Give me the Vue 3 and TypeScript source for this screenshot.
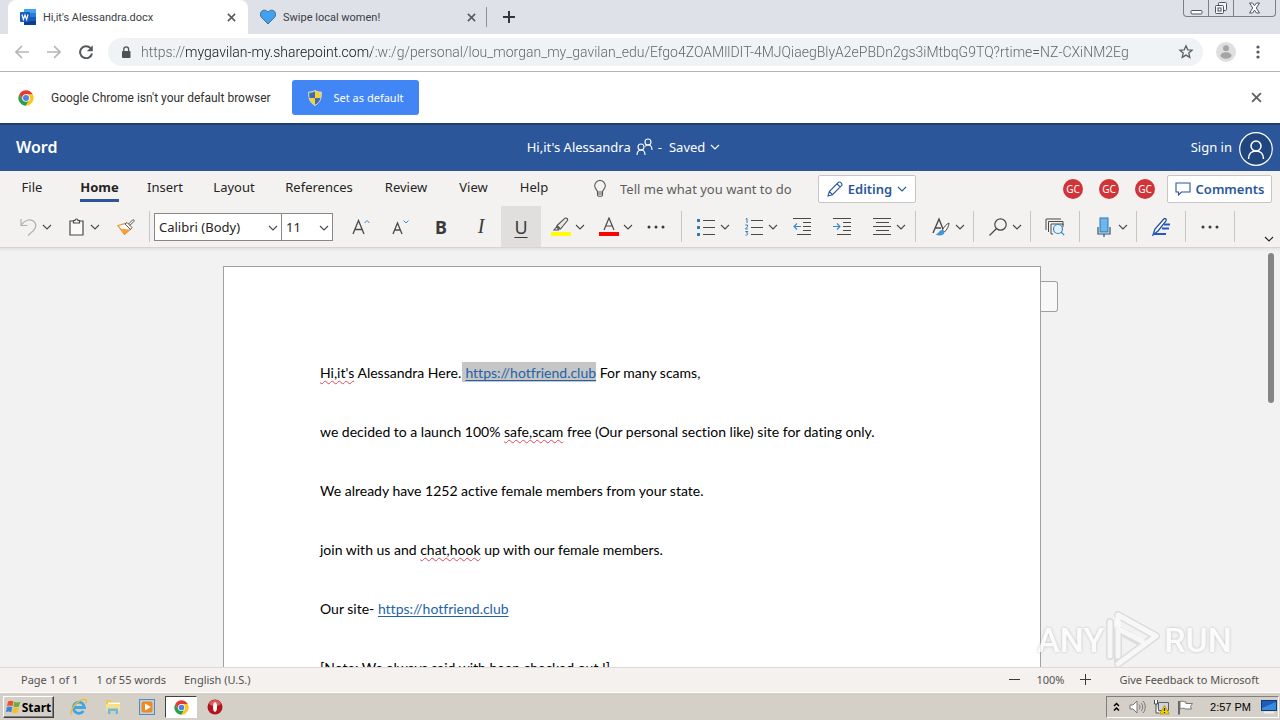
<script setup lang="ts">
import { ref } from 'vue'

const url = ref(
  'https://mygavilan-my.sharepoint.com/:w:/g/personal/lou_morgan_my_gavilan_edu/Efgo4ZOAMllDIT-4MJQiaegBlyA2ePBDn2gs3iMtbqG9TQ?rtime=NZ-CXiNM2Eg'
)
const ribbonTabs: string[] = ['File', 'Home', 'Insert', 'Layout', 'References', 'Review', 'View', 'Help']
const activeTab = ref('Home')
const collaborators: string[] = ['GC', 'GC', 'GC']
const fontName = ref('Calibri (Body)')
const fontSize = ref('11')
const tellMe = ref('')
</script>

<template>
  <svg class="defs" aria-hidden="true">
    <defs>
      <symbol id="chev" viewBox="0 0 10 6"><path d="M1 1l4 4 4-4" fill="none" stroke="currentColor" stroke-width="1.1" /></symbol>
      <symbol id="cross" viewBox="0 0 10 10"><path d="M1 1l8 8M9 1l-8 8" fill="none" stroke="currentColor" stroke-width="1.7" /></symbol>
      <symbol id="dots" viewBox="0 0 18 4"><circle cx="2" cy="2" r="1.5" /><circle cx="9" cy="2" r="1.5" /><circle cx="16" cy="2" r="1.5" /></symbol>
      <symbol id="chrome" viewBox="0 0 48 48">
        <circle cx="24" cy="24" r="23" fill="#fff" />
        <path d="M4.100 12.500A23 23 0 0 0 24 47L34 29.700 24 24 14 29.700Z" fill="#2c9f4b" />
        <path d="M43.900 12.500A23 23 0 0 1 24 47L34 29.700 24 12.500Z" fill="#fbc816" />
        <path d="M4.100 12.500L14 29.700 24 24V12.500H43.900A23 23 0 0 0 4.100 12.500Z" fill="#e33b2e" />
        <circle cx="24" cy="24" r="11.500" fill="#fff" />
        <circle cx="24" cy="24" r="9" fill="#4a83ee" />
      </symbol>
    </defs>
  </svg>
  <div class="desktop">
    <header class="tabstrip">
      <div class="tab active">
        <svg class="ico16" viewBox="0 0 16 16">
          <rect x="4" y="0" width="12" height="16" rx="1" fill="#2b7cd3" />
          <rect x="4" y="0" width="12" height="4" fill="#41a5ee" />
          <rect x="4" y="8" width="12" height="4" fill="#185abd" />
          <rect x="4" y="12" width="12" height="4" fill="#103f91" />
          <rect x="0" y="3" width="10" height="10" rx="1" fill="#185abd" />
          <path d="M2 5.500l1.400 5L5 6l1.600 4.500L8 5.500" fill="none" stroke="#fff" stroke-width="1.200" />
        </svg>
        <span class="tab-title">Hi,it's Alessandra.docx</span>
        <button class="close" aria-label="Close tab"><svg width="9" height="9"><use href="#cross" /></svg></button>
      </div>
      <div class="tab">
        <svg class="ico16" viewBox="0 0 16 16">
          <path d="M8 15L1.200 8C-.5 5.500.5 1.500 4 1.200 6 1 7.500 2.200 8 3.200 8.500 2.200 10 1 12 1.200c3.500.3 4.500 4.300 2.800 6.800z" fill="#41a0ef" stroke="#3e7096" />
        </svg>
        <span class="tab-title">Swipe local women!</span>
        <button class="close" aria-label="Close tab"><svg width="9" height="9"><use href="#cross" /></svg></button>
      </div>
      <span class="tab-divider"></span>
      <button class="new-tab" aria-label="New tab"><svg width="12" height="12" viewBox="0 0 12 12"><path d="M6 0v12M0 6h12" stroke="#33373d" stroke-width="2" /></svg></button>
      <div class="window-controls">
        <button aria-label="Minimize"><svg width="13" height="14" viewBox="0 0 13 14"><rect x="1" y="9.500" width="11" height="3.500" rx="1" fill="#fff" stroke="#50545c" /></svg></button>
        <button aria-label="Restore">
          <svg width="14" height="14" viewBox="0 0 14 14" fill="#f5f6f9" stroke="#50545c">
            <rect x="4.500" y="1.500" width="8" height="8" rx="1" /><rect x="1.500" y="4.500" width="8" height="8" rx="1" /><rect x="4" y="7" width="3" height="3" />
          </svg>
        </button>
        <button class="wide" aria-label="Close window">
          <svg width="13" height="12" viewBox="0 0 13 12"><path d="M1.500 1h3l2 2.700 2-2.700h3L8.300 6l3.200 5h-3l-2-2.800L4.500 11h-3l3.200-5z" fill="#fff" stroke="#50545c" /></svg>
        </button>
      </div>
    </header>

    <nav class="toolbar">
      <button class="nav" aria-label="Back"><svg width="14" height="14" viewBox="0 0 14 14"><path d="M14 7H1.500M7 1L1 7l6 6" fill="none" stroke="#b5b5b5" stroke-width="1.600" /></svg></button>
      <button class="nav" aria-label="Forward"><svg width="14" height="14" viewBox="0 0 14 14"><path d="M0 7h12.500M7 1l6 6-6 6" fill="none" stroke="#b5b5b5" stroke-width="1.600" /></svg></button>
      <button class="nav" aria-label="Reload">
        <svg width="14" height="14" viewBox="0 0 14 14"><path d="M11.600 3.200A6 6 0 1 0 13 8.500" fill="none" stroke="#55585c" stroke-width="2" /><path d="M13.800.3V6.200H7.900z" fill="#55585c" /></svg>
      </button>
      <div class="address">
        <svg width="10" height="12" viewBox="0 0 10 12"><rect x="1" y="5" width="8.500" height="7" rx="1" fill="#4e5156" /><path d="M2.800 5V3.200a2.400 2.400 0 0 1 4.800 0V5" fill="none" stroke="#4e5156" stroke-width="1.300" /></svg>
        <input v-model="url" class="url" type="text" aria-label="Address" spellcheck="false" />
        <button aria-label="Bookmark this page"><svg width="16" height="16" viewBox="0 0 16 16"><path d="M8 1.800l1.800 4 4.300.4-3.300 2.900 1 4.300L8 11.100l-3.800 2.300 1-4.300L1.900 6.200l4.300-.4z" fill="none" stroke="#5c5f64" stroke-width="1.300" /></svg></button>
      </div>
      <button class="profile" aria-label="Profile"><svg width="20" height="20" viewBox="0 0 20 20"><circle cx="10" cy="10" r="10" fill="#dfdfdf" /><circle cx="10" cy="6.300" r="3" fill="#a5a5a5" /><ellipse cx="10" cy="13.500" rx="5.500" ry="3.200" fill="#a5a5a5" /></svg></button>
      <button class="menu" aria-label="Menu"><svg width="4" height="14" viewBox="0 0 4 14" fill="#55585c"><circle cx="2" cy="2" r="1.600" /><circle cx="2" cy="7" r="1.600" /><circle cx="2" cy="12" r="1.600" /></svg></button>
    </nav>

    <section class="infobar">
      <svg class="ico16"><use href="#chrome" /></svg>
      <span class="info-text">Google Chrome isn't your default browser</span>
      <button class="default-btn">
        <svg width="14" height="16" viewBox="0 0 14 16">
          <path d="M7 .5c2 1.300 4 1.600 6.300 1.500C13.500 8 12.500 12.500 7 15.500 1.500 12.500.5 8 .7 2 3 2.100 5 1.800 7 .5z" fill="#f7d033" stroke="#c9d9ef" />
          <path d="M7 1.500V8H1.500C1.200 6 1.200 4.500 1.300 2.800 3.500 2.800 5 2.500 7 1.500zM7 8h5.500c-.6 3-2.300 5-5.500 6.800z" fill="#3c6fae" />
        </svg>
        <span>Set as default</span>
      </button>
      <button class="info-close" aria-label="Dismiss"><svg width="11" height="11"><use href="#cross" /></svg></button>
    </section>

    <header class="word-header">
      <a class="brand" href="#">Word</a>
      <button class="doc-title">
        <span>Hi,it's Alessandra</span>
        <svg width="17" height="18" viewBox="0 0 17 18" fill="none" stroke="#fff" stroke-width="1.100"><circle cx="5" cy="9" r="3" /><path d="M1 17c0-3 1.500-5 4-5s4 2 4 5" /><circle cx="12" cy="4" r="3" /><path d="M9 8.500c.8-1 1.800-1.500 3-1.500 2.500 0 4 2 4 5" /></svg>
        <span>-</span>
        <span class="saved">Saved</span>
        <svg width="10" height="6"><use href="#chev" /></svg>
      </button>
      <button class="sign-in">
        <span>Sign in</span>
        <svg width="34" height="34" viewBox="0 0 34 34" fill="none" stroke="#fff"><circle cx="17" cy="17" r="16.300" fill="#1f467f" stroke-width="1.200" /><circle cx="17" cy="14" r="5" stroke-width="1.500" /><path d="M9.500 27c0-5 3-8 7.500-8s7.500 3 7.500 8" stroke-width="1.500" /></svg>
      </button>
    </header>

    <section class="ribbon">
      <div class="ribbon-top">
        <nav class="ribbon-tabs">
          <button v-for="tab in ribbonTabs" :key="tab" :class="{ current: tab === activeTab }" @click="activeTab = tab"><span>{{ tab }}</span></button>
        </nav>
        <label class="tell-me">
          <svg width="12" height="17" viewBox="0 0 12 17" fill="none" stroke="#5a5856" stroke-width="1.100"><path d="M3.500 12c0-2-2.800-3-2.800-6.200a5.300 5.300 0 0 1 10.600 0C11.300 9 8.500 10 8.500 12z" /><path d="M3.500 12v3.300l1 1h3l1-1V12M3.500 14h5" /></svg>
          <input v-model="tellMe" type="text" placeholder="Tell me what you want to do" aria-label="Tell me what you want to do" />
        </label>
        <button class="box-btn editing">
          <svg width="16" height="16" viewBox="0 0 16 16" fill="none" stroke="#2b579a" stroke-width="1.100"><path d="M1 15l1.300-4.500L11.500 1.300c1.800-1 4.200 1.400 3.200 3.200L5.500 13.700zM10 2.800L13.200 6M2.300 10.500l3.200 3.200" /></svg>
          <span>Editing</span>
          <svg width="10" height="6"><use href="#chev" /></svg>
        </button>
        <div class="people"><span v-for="(person, i) in collaborators" :key="i" class="person">{{ person }}</span></div>
        <button class="box-btn comments">
          <svg width="16" height="14" viewBox="0 0 16 14" fill="none" stroke="#2b579a" stroke-width="1.100"><path d="M1 1h14v9H6.500L3.500 13v-3H1z" /></svg>
          <span>Comments</span>
        </button>
      </div>

      <div class="ribbon-tools">
        <button class="split first" aria-label="Undo"><svg width="17" height="18" viewBox="0 0 17 18" fill="none" stroke="#b3b0ad" stroke-width="1.200"><path d="M1 1v6.500h6.500M1.200 7C6 1 11 .8 14 3.500c3 3 2 7-1 9.500L8 17.500" /></svg><svg width="10" height="6"><use href="#chev" /></svg></button>
        <button class="split" aria-label="Paste"><svg width="15" height="18" viewBox="0 0 15 18" fill="#fafafa" stroke="#4b4947" stroke-width="1.200"><path d="M1 3h13v14H1z" /><path d="M4.500 5V2.500H6C6 .5 9 .5 9 2.500h1.500V5z" /></svg><svg width="10" height="6"><use href="#chev" /></svg></button>
        <button class="tool painter" aria-label="Format painter">
          <svg width="18" height="16" viewBox="0 0 18 16"><path d="M1 6.500l7.500-2 5 5.500-6 5.500z" fill="#fff" stroke="#e8912d" stroke-width="1.200" /><path d="M3 9.500l9 1-4.500 5z" fill="#f6a13a" /><path d="M8 5l2-1.500 5 5-1.500 2zM11.500 5l4-4c1-.8 2.200.4 1.400 1.400l-4 4" fill="#fff" stroke="#55524f" /></svg>
        </button>
        <span class="sep"></span>
        <label class="select name"><select v-model="fontName" aria-label="Font name"><option>Calibri (Body)</option></select><svg width="10" height="6"><use href="#chev" /></svg></label>
        <label class="select size"><select v-model="fontSize" aria-label="Font size"><option>11</option></select><svg width="10" height="6"><use href="#chev" /></svg></label>
        <button class="tool grow" aria-label="Grow font"><svg width="18" height="16" viewBox="0 0 18 16" fill="none"><path d="M1 15L6.500 1.500 12 15M3 10.500h7" stroke="#4b4947" stroke-width="1.300" /><path d="M12.500 4l2.500-2.500L17.500 4" stroke="#3a86c8" /></svg></button>
        <button class="tool" aria-label="Shrink font"><svg width="18" height="16" viewBox="0 0 18 16" fill="none"><path d="M1 15L5.500 4 10 15M2.700 11h5.600" stroke="#4b4947" stroke-width="1.300" /><path d="M11.500 1.500L14 4l2.500-2.500" stroke="#3a86c8" /></svg></button>
        <button class="tool letter b" aria-label="Bold">B</button>
        <button class="tool letter i" aria-label="Italic">I</button>
        <button class="tool letter u pressed" aria-label="Underline">U</button>
        <button class="split hl" aria-label="Highlight"><svg width="20" height="20" viewBox="0 0 20 20"><path d="M0 15h20v4H0z" fill="#ffff00" /><path d="M6 8.500L14 1.200c1.500-.8 3.200.8 2.500 2.300L9.500 12H7zM6 8.500l3.500 3.500M6.200 9L3 13h5" fill="#e8e6e4" stroke="#55524f" stroke-width="1.100" /></svg><svg width="10" height="6"><use href="#chev" /></svg></button>
        <button class="split" aria-label="Font colour"><svg width="20" height="20" viewBox="0 0 20 20"><path d="M0 15h20v4H0z" fill="#f00" /><path d="M5 13L10 1l5 12M6.700 9h6.600" fill="none" stroke="#4b4947" stroke-width="1.200" /></svg><svg width="10" height="6"><use href="#chev" /></svg></button>
        <button class="tool narrow" aria-label="More font options"><svg width="18" height="4"><use href="#dots" /></svg></button>
        <span class="sep far"></span>
        <button class="split" aria-label="Bullets"><svg width="18" height="18" viewBox="0 0 18 18"><path d="M0 1h3v3H0zM0 8h3v3H0zM0 15h3v3H0z" fill="#2d7db8" /><path d="M6 2.500h12M6 9.500h12M6 16.500h12" stroke="#4b4947" stroke-width="1.100" /></svg><svg width="10" height="6"><use href="#chev" /></svg></button>
        <button class="split" aria-label="Numbering"><svg width="18" height="18" viewBox="0 0 18 18" fill="none"><path d="M.8 1L2 .5V5M.3 7h2.200v1.700L.5 11h2.300M.3 13.500h2.500L1.500 15c2 0 1.500 2.500-1 2.200" stroke="#2d7db8" /><path d="M6 2.500h12M6 9.500h12M6 16.500h12" stroke="#4b4947" stroke-width="1.100" /></svg><svg width="10" height="6"><use href="#chev" /></svg></button>
        <button class="tool pull" aria-label="Decrease indent"><svg width="18" height="17" viewBox="0 0 18 17" fill="none"><path d="M0 .5h18M10 4.500h8M10 8.500h8M10 12.500h8M4 16.500h14" stroke="#4b4947" /><path d="M8 8.500H1M4 5.500l-3 3 3 3" stroke="#3a86c8" stroke-width="1.100" /></svg></button>
        <button class="tool" aria-label="Increase indent"><svg width="18" height="17" viewBox="0 0 18 17" fill="none"><path d="M0 .5h18M10 4.500h8M10 8.500h8M10 12.500h8M4 16.500h14" stroke="#4b4947" /><path d="M0 8.500h7M4 5.500l3 3-3 3" stroke="#3a86c8" stroke-width="1.100" /></svg></button>
        <button class="split align" aria-label="Alignment"><svg width="18" height="17" viewBox="0 0 18 17" fill="none"><path d="M0 .5h18M3 4.500h13M0 8.500h18M3 12.500h13M0 16.500h18" stroke="#4b4947" /></svg><svg width="10" height="6"><use href="#chev" /></svg></button>
        <span class="sep"></span>
        <button class="split styles" aria-label="Styles"><svg width="18" height="20" viewBox="0 0 18 20" fill="none"><path d="M1 16L7 2l4 10M3 11h6" stroke="#4b4947" stroke-width="1.400" /><path d="M17 6c-3 1.500-5 4-6.500 7l2 2C15 12.500 16.800 9.500 17 6z" fill="#fff" stroke="#4b4947" /><path d="M10.500 13c-3-.5-3 3-7 4.500 4 2 9 1 9-2.500z" fill="#3c96dc" /></svg><svg width="10" height="6"><use href="#chev" /></svg></button>
        <span class="sep"></span>
        <button class="split find" aria-label="Find"><svg width="18" height="18" viewBox="0 0 18 18" fill="none" stroke="#4b4947" stroke-width="1.200"><circle cx="11.500" cy="6.500" r="5.700" /><path d="M7.500 10.500L.5 17.500" /></svg><svg width="10" height="6"><use href="#chev" /></svg></button>
        <span class="sep"></span>
        <button class="tool reuse" aria-label="Reuse files"><svg width="20" height="18" viewBox="0 0 20 18" fill="none" stroke="#4b4947"><path d="M1 12V1h15M3.500 14V3.500H18V7M8 16H6V6h12v3" /><circle cx="13" cy="11" r="4.500" fill="#e6f2fb" stroke="#2f86c6" stroke-width="1.200" /><path d="M16.200 14.200l3 3" stroke="#2f86c6" stroke-width="1.200" /></svg></button>
        <span class="sep"></span>
        <button class="split dictate" aria-label="Dictate"><svg width="14" height="20" viewBox="0 0 14 20" fill="none"><rect x="3" y="1" width="8" height="14" fill="#6db6ee" stroke="#2b76b5" /><path d="M1 10v7h12v-7M7 17v3" stroke="#2f4f70" stroke-width="1.200" /></svg><svg width="10" height="6"><use href="#chev" /></svg></button>
        <span class="sep"></span>
        <button class="tool reuse" aria-label="Editor"><svg width="18" height="18" viewBox="0 0 18 18" fill="none"><path d="M1 17l2-6L12 .8c1.500-.8 2.800.5 2 2L6 13z" fill="#fff" stroke="#1f4e9c" stroke-width="1.300" /><path d="M12 6.500h6M10 10.500h7M1 16h13" stroke="#2558c9" stroke-width="2.200" /></svg></button>
        <span class="sep"></span>
        <button class="tool reuse" aria-label="More options"><svg width="18" height="4"><use href="#dots" /></svg></button>
        <span class="sep"></span>
        <button class="collapse" aria-label="Collapse ribbon"><svg width="10" height="6"><use href="#chev" /></svg></button>
      </div>
    </section>

    <main class="canvas">
      <article class="page">
        <p><span class="typo">Hi,it's</span> Alessandra Here. <span class="selected">&nbsp;<a href="#">https://hotfriend.club</a></span> For many scams,</p>
        <p>we decided to a launch 100% <span class="typo">safe,scam</span> free (Our personal section like) site for dating only.</p>
        <p>We already have 1252 active female members from your state.</p>
        <p>join with us and <span class="typo">chat,hook</span> up with our female members.</p>
        <p>Our site- <a href="#">https://hotfriend.club</a></p>
        <p>[Note: We always said with been checked out !]</p>
        <div class="comment-tab"></div>
      </article>
      <div class="thumb"></div>
      <div class="watermark">
        <span>ANY</span>
        <svg width="56" height="60" viewBox="0 0 56 60" fill="none"><g stroke="#b9b9b9" stroke-opacity=".5" stroke-width="8" stroke-linejoin="round" stroke-linecap="round"><path d="M12 5L50 26 12 54V20l22 12M4 12v34" /></g><g stroke="#fff" stroke-opacity=".85" stroke-width="5" stroke-linejoin="round" stroke-linecap="round"><path d="M12 46V5l38 21-38 28M14 20l22 11M4 12v34" /></g></svg>
        <span>RUN</span>
      </div>
    </main>

    <footer class="status">
      <button class="st-page">Page 1 of 1</button>
      <button class="st-words">1 of 55 words</button>
      <button class="st-lang">English (U.S.)</button>
      <div class="zoom">
        <button aria-label="Zoom out"><svg width="11" height="11" viewBox="0 0 11 11"><path d="M0 5.500h11" stroke="#3b3a39" /></svg></button>
        <button class="pct">100%</button>
        <button aria-label="Zoom in"><svg width="11" height="11" viewBox="0 0 11 11"><path d="M0 5.500h11M5.500 0v11" stroke="#3b3a39" /></svg></button>
        <a class="feedback" href="#">Give Feedback to Microsoft</a>
      </div>
    </footer>

    <footer class="taskbar">
      <button class="start">
        <svg width="15" height="14" viewBox="0 0 15 14"><path d="M2 1.500c2-1 3.500-1 5.500 0L6.500 6.300c-2-1-3.500-1-5.500 0z" fill="#e8542a" /><path d="M8.300 1.800c2 1 3.700 1 5.900 0L13 6.600c-2 1-3.700 1-5.600 0z" fill="#6fae33" /><path d="M.8 7.300c2-1 3.500-1 5.500 0l-1 5c-2-1-3.500-1-5.300 0z" fill="#3b83d6" /><path d="M7.200 7.600c2 1 3.700 1 5.600 0l-1.100 4.900c-2 1-3.600 1-5.500 0z" fill="#f5c022" /></svg>
        <span>Start</span>
      </button>
      <button class="task" aria-label="Internet Explorer"><svg width="18" height="18" viewBox="0 0 18 18" fill="none"><path d="M3.500 9.500h11A5.600 5.600 0 1 0 13.500 13" stroke="#3fa5e3" stroke-width="2.800" /><path d="M2 16.500C-1 14.500 4 5.500 11 2.200c4.500-2 6.500-.5 4.800 3" stroke="#edb92d" stroke-width="1.300" /></svg></button>
      <button class="task" aria-label="Explorer"><svg width="16" height="16" viewBox="0 0 16 16"><path d="M1 1h5l1 1.500h7V12H1z" fill="#e9c75d" /><path d="M3 3.500h12V8H3z" fill="#fff" /><path d="M1 5h14v7H1z" fill="#f6e08e" /><path d="M3 15V9.500h10V15h-2.500v-3h-5v3z" fill="#71b9dc" /></svg></button>
      <button class="task" aria-label="Media Player"><svg width="16" height="16" viewBox="0 0 16 16"><rect x=".5" y=".5" width="15" height="15" fill="#b8d3e8" stroke="#568bb5" /><rect x="2.500" y="2.500" width="11" height="11" rx="2" fill="#f08a1d" /><path d="M6 4.500L12 8l-6 3.500z" fill="#fff" /></svg></button>
      <button class="task pressed-task" aria-label="Chrome"><svg width="15" height="15"><use href="#chrome" /></svg></button>
      <button class="task" aria-label="Opera"><svg width="16" height="16" viewBox="0 0 16 16"><circle cx="8" cy="8" r="7.500" fill="#b3131b" /><path d="M2 5a6.500 6.500 0 0 1 12 0c-4 3-8 3-12 0z" fill="#dd5a5d" /><ellipse cx="8" cy="8" rx="2" ry="4.800" fill="#fff" /></svg></button>
      <div class="tray">
        <button aria-label="Show hidden icons"><svg width="7" height="10" viewBox="0 0 7 10" fill="none" stroke="#000" stroke-width="1.500"><path d="M1 4l2.500-2.500L6 4M1 8.500L3.500 6 6 8.500" /></svg></button>
        <button class="vol" aria-label="Volume"><svg width="17" height="14" viewBox="0 0 17 14" fill="none" stroke="#77777a"><path d="M1 5h3l4-4v12L4 9H1z" fill="#fff" /><path d="M10 4.500c1.300 1.500 1.300 3.500 0 5M12 2.800c2.200 2.600 2.200 5.800 0 8.400M14 1c3 3.500 3 8.500 0 12" /></svg></button>
        <button class="net" aria-label="Network"><svg width="17" height="16" viewBox="0 0 17 16"><path d="M5.500 3.500h10v8h-10z" fill="#cfd4da" stroke="#5c5f63" /><path d="M1.500 1v4h3V1M3 5v9h3" fill="#fff" stroke="#4b4d50" /><path d="M11.500 6.500l4.800 8.500H6.700z" fill="#f6d400" stroke="#a28a00" stroke-width=".7" /><path d="M11.500 9v3M11.500 13v1" stroke="#222" stroke-width="1.200" /></svg></button>
        <button class="flag" aria-label="Action Center"><svg width="17" height="15" viewBox="0 0 17 15"><path d="M2 1v13.500" stroke="#666" stroke-width="2" /><path d="M3 1.500c3-1 4 .5 6 .5v1.500h6.500l-2 3 1 2.500H8.500c-2-1-3.500-1-5.500 0z" fill="#fff" stroke="#777" /></svg></button>
        <time>2:57 PM</time>
        <button class="show" aria-label="Show desktop"><svg width="16" height="14" viewBox="0 0 16 14"><rect x=".5" y=".5" width="15" height="10" fill="#1f5cb8" stroke="#123a70" /><path d="M1 8L15 2v8H1z" fill="#3c8ae0" /><path d="M3 12.500h10" stroke="#eee" stroke-width="2" /></svg></button>
      </div>
    </footer>
  </div>
</template>

<style>
html, body { margin: 0; height: 100%; overflow: hidden; }
</style>

<style scoped>
* { box-sizing: border-box; }
.defs { position: absolute; width: 0; height: 0; }
.desktop { display: flex; flex-direction: column; height: 100vh; font-family: "Noto Sans", "Open Sans", sans-serif; font-size: 13px; color: #323130; background: #fff; }
button, input, select { font: inherit; color: inherit; border: 0; background: none; padding: 0; margin: 0; outline: 0; }
button { display: flex; align-items: center; justify-content: center; white-space: nowrap; flex: none; }
svg { display: block; flex: none; }
.ico16 { width: 16px; height: 16px; }

.tabstrip { display: flex; align-items: center; height: 34px; flex: none; background: #dee1e8; padding-left: 8px; }
.tab { display: flex; align-items: center; width: 240px; height: 34px; padding: 0 12px; font-family: Roboto, sans-serif; font-size: 11px; color: #3c4043; }
.tab.active { background: #fff; border-radius: 8px 8px 0 0; }
.tab-title { flex: 1; margin-left: 7px; white-space: nowrap; }
.close { color: #55585c; width: 9px; }
.tab-divider { width: 1px; height: 20px; background: #8c9097; margin-left: -2px; }
.new-tab { width: 44px; height: 28px; }
.window-controls { display: flex; align-self: flex-start; height: 17px; margin-left: auto; margin-right: 4px; border: 1px solid #7b8089; border-top: 0; border-radius: 0 0 4px 4px; }
.window-controls button { width: 25px; border-right: 1px solid #7b8089; }
.window-controls .wide { width: 41px; border-right: 0; }

.toolbar { display: flex; align-items: center; height: 38px; flex: none; padding: 0 14px 2px 6px; border-bottom: 1px solid #b5b5b5; background: #fff; }
.nav { width: 32px; height: 28px; }
.address { flex: 1; display: flex; align-items: center; height: 28px; margin-left: 6px; padding: 0 9px 0 13px; border-radius: 14px; background: #f0f3f5; }
.url { flex: 1; min-width: 0; margin-left: 10px; font-family: Roboto, sans-serif; font-size: 14px; font-weight: 300; height: 22px; color: #5c6064; -webkit-text-fill-color: transparent; background: linear-gradient(to right, #5c6064 45px, #101114 45px 231px, #5c6064 231px); -webkit-background-clip: text; background-clip: text; }
.profile { width: 20px; margin-left: 13px; }
.menu { width: 16px; margin-left: 14px; }

.infobar { display: flex; align-items: center; height: 51px; flex: none; padding: 0 18px; background: #fff; }
.info-text { margin-left: 17px; min-width: 229px; font-family: Roboto, sans-serif; font-size: 12px; white-space: nowrap; }
.default-btn { width: 127px; height: 35px; margin-left: 12px; gap: 12px; border-radius: 3px; background: #4285f4; color: #fff; font-size: 11px; }
.info-close { margin-left: auto; width: 12px; color: #5f6368; }

.word-header { display: flex; align-items: center; justify-content: space-between; height: 48px; flex: none; padding: 2px 7px 0 16px; border-top: 2px solid #1f3f70; background: #2b579a; color: #fff; }
.brand { flex: 1; padding-bottom: 4px; color: #fff; text-decoration: none; font-size: 16px; font-weight: 600; }
.doc-title { gap: 5px; margin-right: 42px; padding-bottom: 4px; }
.saved { margin-left: 2px; }
.sign-in { flex: 1; justify-content: flex-end; gap: 7px; }
.sign-in span { padding-bottom: 4px; }

.ribbon { flex: none; background: #f3f2f1; border-bottom: 1px solid #d6d4d2; }
.ribbon-top { display: flex; align-items: center; height: 35px; padding-right: 8px; }
.ribbon-tabs { display: grid; grid-template-columns: 64px 71px 60px 78px 92px 82px 53px 68px; height: 33px; align-self: flex-start; }
.ribbon-tabs button { color: #252423; }
.ribbon-tabs span { padding: 5px 0 3px; border-bottom: 3px solid transparent; }
.ribbon-tabs .current span { border-color: #2b579a; font-weight: 700; }
.tell-me { display: flex; align-items: center; flex: 0 0 224px; margin-left: 26px; gap: 14px; }
.tell-me input { flex: 1; min-width: 0; }
.tell-me input::placeholder { color: #605e5c; opacity: 1; }
.box-btn { height: 28px; border: 1px solid #c8c6c4; border-radius: 2px; background: #fff; color: #2b579a; font-weight: 600; }
.editing { width: 98px; gap: 5px; }
.people { display: flex; gap: 16px; margin-left: auto; margin-right: 12px; }
.person { width: 20px; height: 20px; border-radius: 50%; background: #d13438; color: #fff; font-size: 10px; line-height: 20px; text-align: center; }
.comments { width: 105px; gap: 5px; }

.ribbon-tools { display: flex; align-items: center; height: 41px; padding-right: 6px; color: #4b4947; }
.tool { width: 40px; height: 41px; fill: #3b3a39; }
.split { width: 48px; height: 41px; display: grid; grid-template-columns: 20px 10px; column-gap: 4px; justify-items: center; justify-content: center; padding-right: 2px; }
.first { margin-left: 12px; }
.painter { width: 35px; }
.sep { width: 1px; height: 31px; background: #c8c6c4; margin: 0 4px; flex: none; }
.painter + .sep { margin: 0 4px 0 6px; }
.select { position: relative; display: flex; height: 28px; flex: none; border: 1px solid #8a8886; background: #fff; }
.select select { appearance: none; width: 100%; padding-left: 4px; color: #252423; }
.select svg { position: absolute; right: 3px; top: 11px; pointer-events: none; }
.name { width: 128px; }
.size { width: 52px; margin-left: -1px; }
.grow { margin-left: 8px; }
.letter { font-size: 18px; color: #3b3a39; }
.b { font-weight: 700; }
.i { font-family: "Liberation Serif", serif; font-style: italic; font-size: 20px; }
.u { text-decoration: underline; text-underline-offset: 3px; }
.pressed { background: #e1dfdd; }
.hl { margin-left: 4px; }
.narrow { width: 30px; }
.sep.far { margin: 0 8px 0 10px; }
.pull { margin-left: -4px; }
.align { margin-left: 4px; }
.align + .sep { margin: 0 9px 0 1px; }
.styles + .sep { margin: 0 8px 0 0; }
.find + .sep { margin: 0 4px 0 0; }
.reuse + .sep { margin: 0 4px; }
.dictate { margin-left: 4px; }
.dictate + .sep { margin: 0 4px 0 0; }
.collapse { margin-left: auto; align-self: flex-end; height: 16px; color: #252423; }

.canvas { position: relative; flex: 1; min-height: 0; overflow: hidden; padding: 18px 16px 0 0; background: linear-gradient(#e4e4e4, #f2f2f2 4px); }
.page { position: relative; width: 818px; height: 1058px; margin: 0 auto; padding: 96px 96px 0; border: 1px solid #a0a0a0; background: #fff; font-family: Lato, "Noto Sans", sans-serif; font-size: 14px; font-variant-ligatures: none; color: #000; }
.page p { margin: 0 0 39px; line-height: 20px; white-space: nowrap; }
.page a { color: #1f63a8; text-decoration: underline; text-underline-offset: 2px; }
.typo { text-decoration: underline wavy #e0485a 1px; text-underline-offset: 2px; text-decoration-skip-ink: none; }
.selected { background: #c6c6c6; padding: 2px 0 1px; margin-left: -3px; }
.comment-tab { position: absolute; left: 817px; top: 14px; width: 17px; height: 31px; border: 1px solid #a0a0a0; border-left: 0; border-radius: 0 3px 3px 0; background: #f8f8f8; }
.thumb { position: absolute; right: 6px; top: 5px; width: 6px; height: 150px; border-radius: 3px; background: #858585; }
.watermark { position: absolute; right: 48px; bottom: -3px; display: flex; align-items: center; gap: 2px; font-family: Roboto, sans-serif; font-size: 34px; font-weight: 500; color: #fff; text-shadow: 0 0 3px #aaa; pointer-events: none; opacity: .75; }

.status { display: flex; align-items: center; height: 25px; flex: none; padding: 0 21px 2px 21px; gap: 18px; border-top: 1px solid #dddbd9; background: #f4f1ef; font-size: 11px; color: #55524f; }
.zoom { display: flex; align-items: center; margin-left: auto; gap: 16px; }
.feedback { margin-left: 12px; color: #55524f; text-decoration: none; }

.taskbar { display: flex; align-items: center; height: 28px; flex: none; padding: 1px 1px 0 3px; border-top: 1px solid #fff; background: #d4d0c8; }
.start { width: 51px; height: 22px; border: 1px solid; border-color: #fff #404040 #404040 #fff; box-shadow: inset -1px -1px #808080; font-size: 12px; font-weight: 700; color: #000; gap: 1px; margin-right: 8px; }
.task { width: 34px; height: 22px; }
.pressed-task { width: 32px; background: #fff; border: 1px solid; border-color: #404040 #fff #fff #404040; margin: 0 1px; }
.tray { display: flex; align-items: center; height: 22px; margin-left: auto; padding: 0 1px 0 6px; border: 1px solid; border-color: #808080 #fff #fff #808080; font-family: "Liberation Sans", sans-serif; font-size: 11px; color: #000; }
.vol { margin-left: 9px; }
.net, .flag { margin-left: 7px; }
.tray time { margin: 0 10px 0 16px; }
</style>
